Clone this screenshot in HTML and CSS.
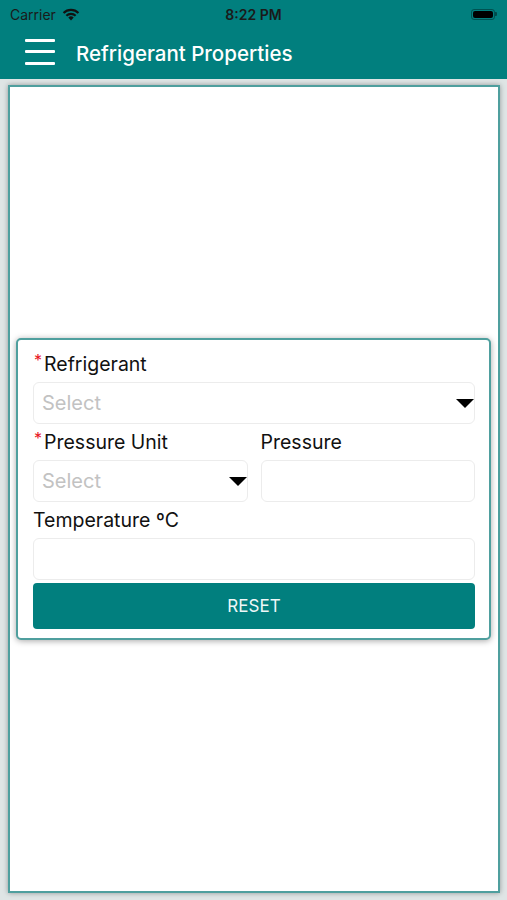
FILE: index.html
```html
<!DOCTYPE html>
<html lang="en">
<head>
    <meta charset="UTF-8">
    <title>Refrigerant Properties</title>
    <link rel="stylesheet" href="styles.css">
</head>
<body>
    <header class="topbar">
        <!-- iOS status bar -->
        <div class="status">
            <div class="status-left">
                <span>Carrier</span>
                <svg class="wifi" width="18" height="13" viewBox="0 0 18 13">
                    <path d="M9 12.5 L6.3 9.6 A3.9 3.9 0 0 1 11.7 9.6 Z" fill="#111"/>
                    <path d="M3.6 7 A7.6 7.6 0 0 1 14.4 7 L12.9 8.5 A5.5 5.5 0 0 0 5.1 8.5 Z" fill="#111"/>
                    <path d="M0.8 4.2 A11.6 11.6 0 0 1 17.2 4.2 L15.7 5.7 A9.5 9.5 0 0 0 2.3 5.7 Z" fill="#111"/>
                </svg>
            </div>
            <div class="status-time">8:22 PM</div>
            <div class="status-right">
                <div class="battery"><div class="battery-fill"></div></div>
                <div class="battery-cap"></div>
            </div>
        </div>

        <div class="nav">
            <button class="menu-btn" aria-label="Menu">
                <span></span><span></span><span></span>
            </button>
            <h1>Refrigerant Properties</h1>
        </div>
    </header>

    <main class="panel">
        <div class="card">
            <div class="field">
                <label class="required">Refrigerant</label>
                <div class="select">
                    <span class="placeholder">Select</span>
                    <span class="caret"></span>
                </div>
            </div>

            <div class="row">
                <div class="field">
                    <label class="required">Pressure Unit</label>
                    <div class="select">
                        <span class="placeholder">Select</span>
                        <span class="caret"></span>
                    </div>
                </div>
                <div class="field">
                    <label>Pressure</label>
                    <div class="input"></div>
                </div>
            </div>

            <div class="field">
                <label>Temperature ºC</label>
                <div class="input"></div>
            </div>

            <button class="reset">RESET</button>
        </div>
    </main>
</body>
</html>
```

FILE: styles.css
```css
* {
    box-sizing: border-box;
    margin: 0;
    padding: 0;
}

body {
    font-family: Inter, 'Liberation Sans', sans-serif;
    background-color: #dfe5e5;
    color: #111;
    width: 507px;
    height: 900px;
    overflow: hidden;
}

/* Header */
.topbar {
    background-color: #017f7e;
    height: 79px;
}

.status {
    height: 28px;
    display: flex;
    align-items: center;
    justify-content: space-between;
    padding: 0 10px 0 10px;
    font-size: 14px;
    color: #1a1a1a;
}

.status-left {
    display: flex;
    align-items: center;
    gap: 6px;
    width: 120px;
}

.status-time {
    font-weight: 600;
}

.status-right {
    width: 120px;
    display: flex;
    align-items: center;
    justify-content: flex-end;
}

.battery {
    width: 24px;
    height: 11px;
    border: 1px solid rgba(0, 0, 0, 0.35);
    border-radius: 3px;
    padding: 1px;
}

.battery-fill {
    width: 100%;
    height: 100%;
    background-color: #000;
    border-radius: 2px;
}

.battery-cap {
    width: 2px;
    height: 4px;
    background-color: rgba(0, 0, 0, 0.4);
    border-radius: 0 1px 1px 0;
}

.nav {
    height: 51px;
    display: flex;
    align-items: center;
    padding-left: 25px;
}

.menu-btn {
    width: 30px;
    height: 26px;
    background: none;
    border: none;
    display: flex;
    flex-direction: column;
    justify-content: space-between;
    margin-right: 21px;
    margin-bottom: 4px;
}

.menu-btn span {
    display: block;
    height: 3px;
    width: 100%;
    background-color: #fff;
    border-radius: 1px;
}

.nav h1 {
    color: #fff;
    font-size: 20.5px;
    font-weight: 500;
}

/* Main white panel */
.panel {
    margin: 6px 7px 0 8px;
    height: 808px;
    background-color: #fff;
    border: 2px solid #4f9f9e;
    box-shadow: 0 0 5px rgba(0, 0, 0, 0.35);
    display: flex;
    flex-direction: column;
    justify-content: center;
    padding: 0 7px 0 6px;
}

.card {
    border: 2px solid #4f9f9e;
    border-radius: 5px;
    box-shadow: 0 1px 6px rgba(0, 0, 0, 0.35);
    padding: 12px 14px 9px 15px;
    background-color: #fff;
    display: flex;
    flex-direction: column;
}

.field {
    display: flex;
    flex-direction: column;
}

.field label {
    font-size: 19.5px;
    line-height: 24px;
    margin-bottom: 6px;
    color: #111;
}

.required::before {
    content: "*";
    color: #e8141e;
    font-size: 16px;
    vertical-align: top;
    line-height: 16px;
    margin-left: 1px;
    margin-right: 2px;
}

.select, .input {
    height: 42px;
    border: 1px solid #ececec;
    border-radius: 6px;
    display: flex;
    align-items: center;
    justify-content: space-between;
    padding-left: 8px;
    margin-bottom: 6px;
}

.placeholder {
    color: #c2c2c2;
    font-size: 20px;
}

.caret {
    width: 0;
    height: 0;
    border-left: 9px solid transparent;
    border-right: 9px solid transparent;
    border-top: 9px solid #000;
}

.row {
    display: grid;
    grid-template-columns: 1fr 1fr;
    column-gap: 13px;
}

.field:last-of-type .input {
    margin-bottom: 3px;
}

.reset {
    height: 46px;
    background-color: #017f7e;
    color: #eef8f8;
    border: none;
    border-radius: 4px;
    font-family: Inter, 'Liberation Sans', sans-serif;
    font-size: 17px;
}
```
